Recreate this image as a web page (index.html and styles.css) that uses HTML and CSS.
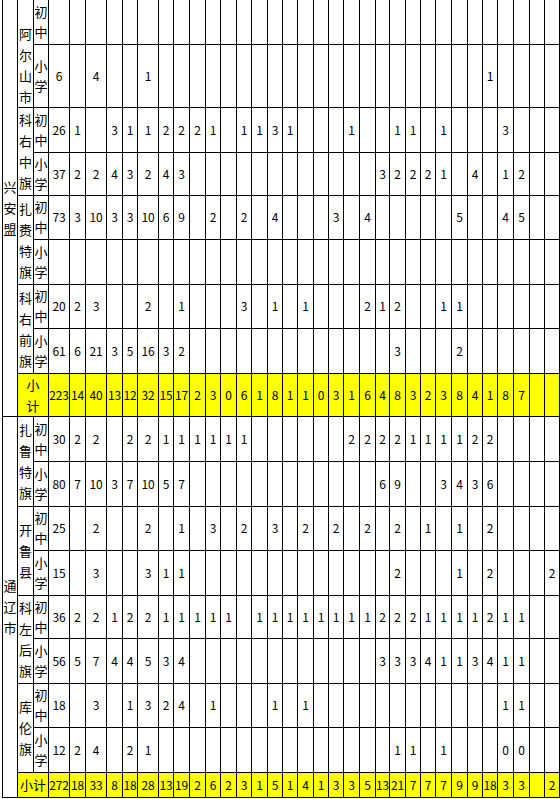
FILE: index.html
```html
<!DOCTYPE html>
<html lang="zh-CN">
<head>
<meta charset="utf-8">
<title>统计表</title>
<link rel="stylesheet" href="styles.css">
</head>
<body>
<table class="sheet">
<colgroup>
<col class="w15"><col class="w16"><col class="w15">
<col class="w21"><col class="w16"><col class="w21"><col class="w16"><col class="w15"><col class="w21"><col class="w15"><col class="w16">
<col class="w16"><col class="w15"><col class="w16"><col class="w15"><col class="w16"><col class="w15"><col class="w15"><col class="w16">
<col class="w15"><col class="w15"><col class="w16"><col class="w16"><col class="w14"><col class="w16"><col class="w15"><col class="w15">
<col class="w16"><col class="w16"><col class="w15"><col class="w15"><col class="w16"><col class="w16"><col class="w15"><col class="w15">
</colgroup>
<tbody>
<tr class="h44 first">
<td rowspan="9" class="region">兴安盟</td><td rowspan="2" class="county low">阿尔山市</td><td class="lvl">初中</td>
<td></td><td></td><td></td><td></td><td></td><td></td><td></td><td></td>
<td></td><td></td><td></td><td></td><td></td><td></td><td></td><td></td>
<td></td><td></td><td></td><td></td><td></td><td></td><td></td><td></td>
<td></td><td></td><td></td><td></td><td></td><td></td><td></td><td></td>
</tr>
<tr class="h63">
<td class="lvl">小学</td>
<td>6</td><td></td><td>4</td><td></td><td></td><td>1</td><td></td><td></td>
<td></td><td></td><td></td><td></td><td></td><td></td><td></td><td></td>
<td></td><td></td><td></td><td></td><td></td><td></td><td></td><td></td>
<td></td><td></td><td></td><td>1</td><td></td><td></td><td></td><td></td>
</tr>
<tr class="h45">
<td rowspan="2" class="county">科右中旗</td><td class="lvl">初中</td>
<td>26</td><td>1</td><td></td><td>3</td><td>1</td><td>1</td><td>2</td><td>2</td>
<td>2</td><td>1</td><td></td><td>1</td><td>1</td><td>3</td><td>1</td><td></td>
<td></td><td></td><td>1</td><td></td><td></td><td>1</td><td>1</td><td></td>
<td>1</td><td></td><td></td><td></td><td>3</td><td></td><td></td><td></td>
</tr>
<tr class="h43">
<td class="lvl">小学</td>
<td>37</td><td>2</td><td>2</td><td>4</td><td>3</td><td>2</td><td>4</td><td>3</td>
<td></td><td></td><td></td><td></td><td></td><td></td><td></td><td></td>
<td></td><td></td><td></td><td></td><td>3</td><td>2</td><td>2</td><td>2</td>
<td>1</td><td></td><td>4</td><td></td><td>1</td><td>2</td><td></td><td></td>
</tr>
<tr class="h44">
<td rowspan="2" class="county">扎赉特旗</td><td class="lvl">初中</td>
<td>73</td><td>3</td><td>10</td><td>3</td><td>3</td><td>10</td><td>6</td><td>9</td>
<td></td><td>2</td><td></td><td>2</td><td></td><td>4</td><td></td><td></td>
<td></td><td>3</td><td></td><td>4</td><td></td><td></td><td></td><td></td>
<td></td><td>5</td><td></td><td></td><td>4</td><td>5</td><td></td><td></td>
</tr>
<tr class="h45">
<td class="lvl">小学</td>
<td></td><td></td><td></td><td></td><td></td><td></td><td></td><td></td>
<td></td><td></td><td></td><td></td><td></td><td></td><td></td><td></td>
<td></td><td></td><td></td><td></td><td></td><td></td><td></td><td></td>
<td></td><td></td><td></td><td></td><td></td><td></td><td></td><td></td>
</tr>
<tr class="h44">
<td rowspan="2" class="county">科右前旗</td><td class="lvl">初中</td>
<td>20</td><td>2</td><td>3</td><td></td><td></td><td>2</td><td></td><td>1</td>
<td></td><td></td><td></td><td>3</td><td></td><td>1</td><td></td><td>1</td>
<td></td><td></td><td></td><td>2</td><td>1</td><td>2</td><td></td><td></td>
<td>1</td><td>1</td><td></td><td></td><td></td><td></td><td></td><td></td>
</tr>
<tr class="h45">
<td class="lvl">小学</td>
<td>61</td><td>6</td><td>21</td><td>3</td><td>5</td><td>16</td><td>3</td><td>2</td>
<td></td><td></td><td></td><td></td><td></td><td></td><td></td><td></td>
<td></td><td></td><td></td><td></td><td></td><td>3</td><td></td><td></td>
<td></td><td>2</td><td></td><td></td><td></td><td></td><td></td><td></td>
</tr>
<tr class="h43 total">
<td colspan="2" class="sub">小<br>计</td>
<td>223</td><td>14</td><td>40</td><td>13</td><td>12</td><td>32</td><td>15</td><td>17</td>
<td>2</td><td>3</td><td>0</td><td>6</td><td>1</td><td>8</td><td>1</td><td>1</td>
<td>0</td><td>3</td><td>1</td><td>6</td><td>4</td><td>8</td><td>3</td><td>2</td>
<td>3</td><td>8</td><td>4</td><td>1</td><td>8</td><td>7</td><td></td><td></td>
</tr>
<tr class="h45">
<td rowspan="9" class="region">通辽市</td><td rowspan="2" class="county">扎鲁特旗</td><td class="lvl">初中</td>
<td>30</td><td>2</td><td>2</td><td></td><td>2</td><td>2</td><td>1</td><td>1</td>
<td>1</td><td>1</td><td>1</td><td>1</td><td></td><td></td><td></td><td></td>
<td></td><td></td><td>2</td><td>2</td><td>2</td><td>2</td><td>1</td><td>1</td>
<td>1</td><td>1</td><td>2</td><td>2</td><td></td><td></td><td></td><td></td>
</tr>
<tr class="h45">
<td class="lvl">小学</td>
<td>80</td><td>7</td><td>10</td><td>3</td><td>7</td><td>10</td><td>5</td><td>7</td>
<td></td><td></td><td></td><td></td><td></td><td></td><td></td><td></td>
<td></td><td></td><td></td><td></td><td>6</td><td>9</td><td></td><td></td>
<td>3</td><td>4</td><td>3</td><td>6</td><td></td><td></td><td></td><td></td>
</tr>
<tr class="h44">
<td rowspan="2" class="county">开鲁县</td><td class="lvl">初中</td>
<td>25</td><td></td><td>2</td><td></td><td></td><td>2</td><td></td><td>1</td>
<td></td><td>3</td><td></td><td>2</td><td></td><td>3</td><td></td><td>2</td>
<td></td><td>2</td><td></td><td>2</td><td></td><td>2</td><td></td><td>1</td>
<td></td><td>1</td><td></td><td>2</td><td></td><td></td><td></td><td></td>
</tr>
<tr class="h45">
<td class="lvl">小学</td>
<td>15</td><td></td><td>3</td><td></td><td></td><td>3</td><td>1</td><td>1</td>
<td></td><td></td><td></td><td></td><td></td><td></td><td></td><td></td>
<td></td><td></td><td></td><td></td><td></td><td>2</td><td></td><td></td>
<td></td><td>1</td><td></td><td>2</td><td></td><td></td><td></td><td>2</td>
</tr>
<tr class="h43">
<td rowspan="2" class="county">科左后旗</td><td class="lvl">初中</td>
<td>36</td><td>2</td><td>2</td><td>1</td><td>2</td><td>2</td><td>1</td><td>1</td>
<td>1</td><td>1</td><td>1</td><td></td><td>1</td><td>1</td><td>1</td><td>1</td>
<td>1</td><td>1</td><td>1</td><td>1</td><td>2</td><td>2</td><td>2</td><td>1</td>
<td>1</td><td>1</td><td>1</td><td>2</td><td>1</td><td>1</td><td></td><td></td>
</tr>
<tr class="h45">
<td class="lvl">小学</td>
<td>56</td><td>5</td><td>7</td><td>4</td><td>4</td><td>5</td><td>3</td><td>4</td>
<td></td><td></td><td></td><td></td><td></td><td></td><td></td><td></td>
<td></td><td></td><td></td><td></td><td>3</td><td>3</td><td>3</td><td>4</td>
<td>1</td><td>1</td><td>3</td><td>4</td><td>1</td><td>1</td><td></td><td></td>
</tr>
<tr class="h44">
<td rowspan="2" class="county">库伦旗</td><td class="lvl">初中</td>
<td>18</td><td></td><td>3</td><td></td><td>1</td><td>3</td><td>2</td><td>4</td>
<td></td><td>1</td><td></td><td></td><td></td><td>1</td><td></td><td>1</td>
<td></td><td></td><td></td><td></td><td></td><td></td><td></td><td></td>
<td></td><td></td><td></td><td></td><td>1</td><td>1</td><td></td><td></td>
</tr>
<tr class="h45">
<td class="lvl">小学</td>
<td>12</td><td>2</td><td>4</td><td></td><td>2</td><td>1</td><td></td><td></td>
<td></td><td></td><td></td><td></td><td></td><td></td><td></td><td></td>
<td></td><td></td><td></td><td></td><td></td><td>1</td><td>1</td><td></td>
<td>1</td><td></td><td></td><td></td><td>0</td><td>0</td><td></td><td></td>
</tr>
<tr class="h25 total">
<td colspan="2" class="sub">小计</td>
<td>272</td><td>18</td><td>33</td><td>8</td><td>18</td><td>28</td><td>13</td><td>19</td>
<td>2</td><td>6</td><td>2</td><td>3</td><td>1</td><td>5</td><td>1</td><td>4</td>
<td>1</td><td>3</td><td>3</td><td>5</td><td>13</td><td>21</td><td>7</td><td>7</td>
<td>7</td><td>9</td><td>9</td><td>18</td><td>3</td><td>3</td><td></td><td>2</td>
</tr>
</tbody>
</table>
</body>
</html>
```

FILE: styles.css
```css
html, body {
  margin: 0;
  padding: 0;
  background: #ffffff;
}

body {
  padding-left: 2px;
  font-family: "Noto Sans CJK SC", "Noto Sans", sans-serif;
  color: #000000;
}

.sheet {
  border-collapse: collapse;
  table-layout: fixed;
  width: 558px;
}

.w14 { width: 14px; }
.w15 { width: 15px; }
.w16 { width: 16px; }
.w21 { width: 21px; }

.sheet td {
  border: 1px solid #000000;
  padding: 0;
  font-size: 12px;
  line-height: 14px;
  text-align: center;
  vertical-align: middle;
  white-space: nowrap;
  overflow: visible;
  letter-spacing: -0.2px;
}

.sheet tr.first td {
  border-top-style: hidden;
}

.h25 { height: 25px; }
.h43 { height: 43px; }
.h44 { height: 44px; }
.h45 { height: 45px; }
.h63 { height: 63px; }

.sheet td.region,
.sheet td.county,
.sheet td.lvl,
.sheet td.sub {
  font-size: 13px;
  line-height: 21px;
  white-space: normal;
  letter-spacing: 0;
  background: #ffffff;
}

.sheet td.lvl {
  line-height: 20px;
}

.sheet td.county.low {
  vertical-align: bottom;
}

.sheet tr.total td {
  background: #ffff00;
}

.sheet tr.total td.sub {
  background: #ffff00;
}
```
